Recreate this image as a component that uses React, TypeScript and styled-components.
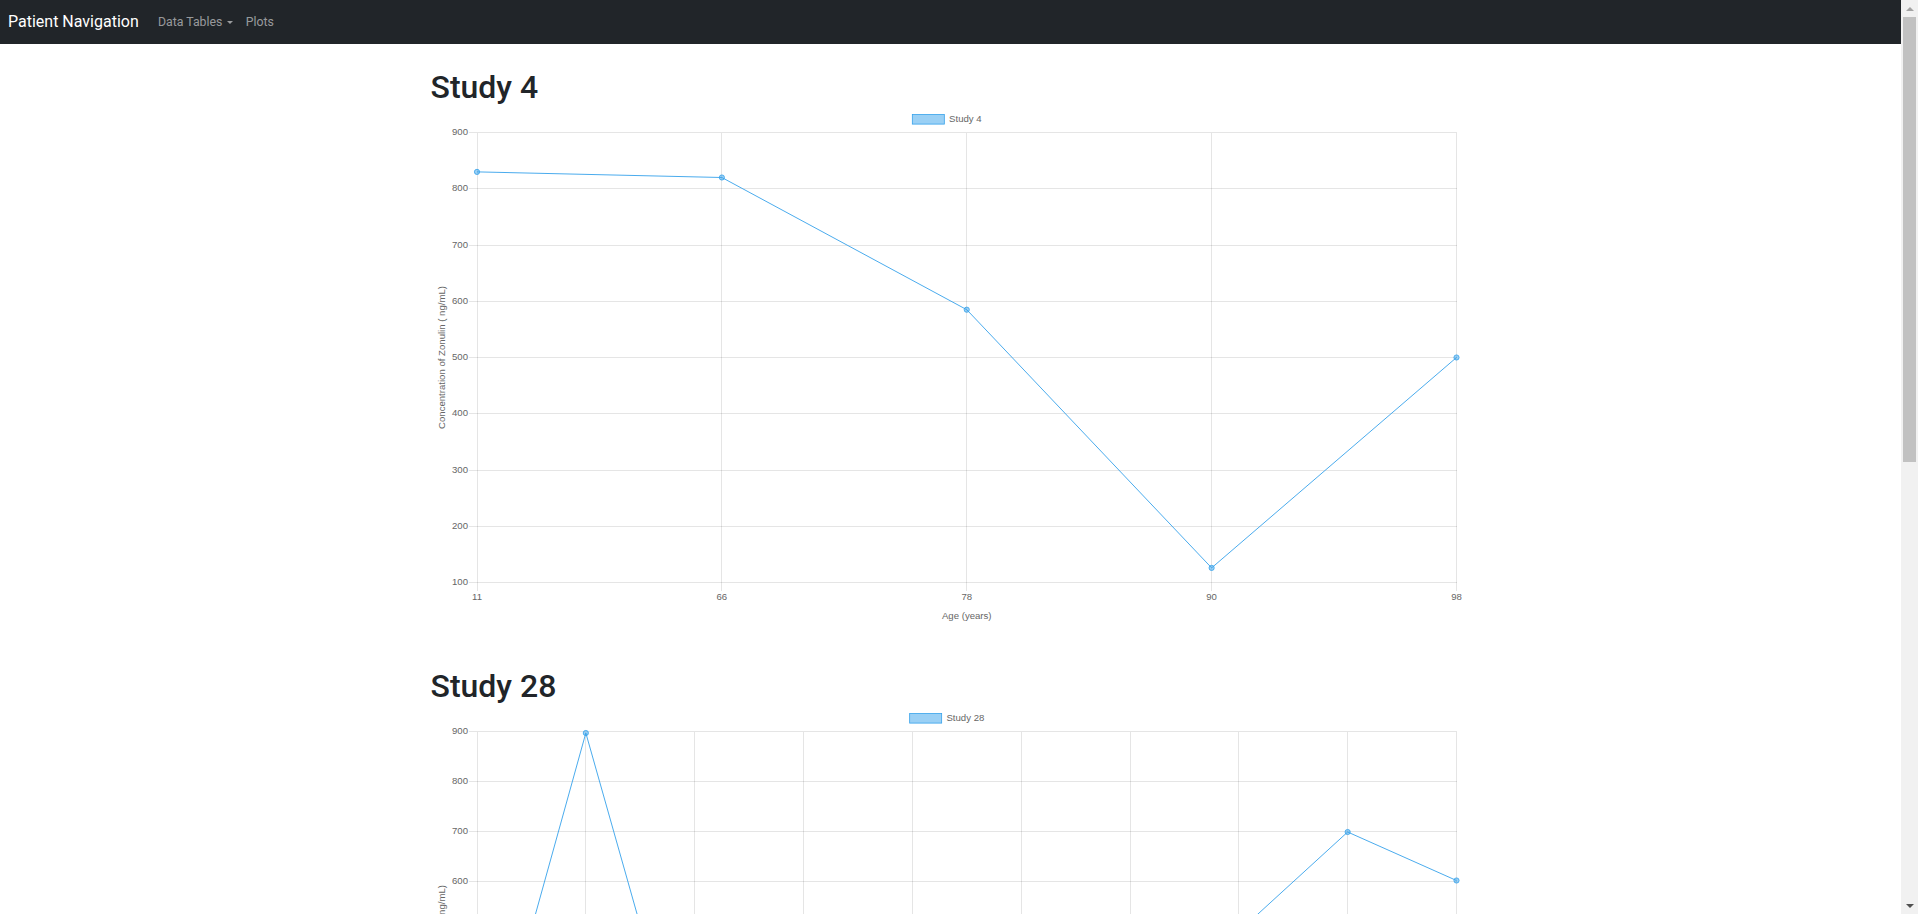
import React from 'react';
import styled, {createGlobalStyle} from 'styled-components';

const GlobalStyle = createGlobalStyle`
  html, body {
    margin: 0;
    padding: 0;
    background: #fff;
  }
  body {
    font-family: Roboto, "Liberation Sans", Arial, sans-serif;
    color: #212529;
  }
  #root {
    padding-right: 17px;
  }
`;

const Navbar = styled.nav`
  height: 44px;
  box-sizing: border-box;
  background: #212529;
  display: flex;
  align-items: center;
  padding: 0 8px;
`;
const Brand = styled.a`
  color: #fff;
  font-size: 16px;
  line-height: 24px;
  margin-right: 12.8px;
  text-decoration: none;
`;
const NavLink = styled.a`
  display: flex;
  align-items: center;
  color: rgba(255, 255, 255, 0.55);
  font-size: 12.3px;
  line-height: 20px;
  padding: 0 6.4px;
  text-decoration: none;
`;
const Caret = styled.span`
  display: inline-block;
  width: 0;
  height: 0;
  margin-left: 4.5px;
  margin-top: 1px;
  border-top: 3.8px solid currentColor;
  border-left: 3.6px solid transparent;
  border-right: 3.6px solid transparent;
`;

// window scrollbar, as in the screenshot
const ScrollTrack = styled.div`
  position: fixed;
  top: 0;
  right: 0;
  width: 17px;
  height: 100vh;
  background: #f1f1f1;
  display: flex;
  flex-direction: column;
`;
const ScrollArrow = styled.div<{ $down?: boolean; $dim?: boolean }>`
  height: 17px;
  display: flex;
  align-items: center;
  justify-content: center;
  margin-top: ${p => p.$down ? 'auto' : '0'};
  &::after {
    content: '';
    width: 0;
    height: 0;
    border-left: 4px solid transparent;
    border-right: 4px solid transparent;
    ${p => p.$down ? 'border-top' : 'border-bottom'}: 4px solid ${p => p.$dim ? '#a3a3a3' : '#505050'};
  }
`;
const ScrollThumb = styled.div`
  height: 445px;
  margin: 0 2px;
  background: #c1c1c1;
`;

const Main = styled.main`
  width: 1040px;
  margin: 0 auto;
  padding: 24px 0 0;
  display: flex;
  flex-direction: column;
  gap: 41px;
`;
const Section = styled.section`
  display: flex;
  flex-direction: column;
`;
const Title = styled.h2`
  margin: 0;
  font-size: 32px;
  font-weight: 500;
  line-height: 38px;
  color: #212529;
`;
const ChartSvg = styled.svg`
  display: block;
  font-family: "Liberation Sans", Arial, sans-serif;
  font-size: 9.6px;
  text {
    fill: #666;
  }
`;

// chart.js-like sizes (page zoomed to 80%)
const W = 1040;
const H = 520;
const PLOT_L = 46;
const PLOT_R = 1025.5;
const PLOT_T = 26.5;
const PLOT_B = 476.5;
const TICK = 8;
const GRID = 'rgba(0,0,0,0.1)';
const BLUE = '#36a2eb';
const BLUE_FILL = 'rgba(54,162,235,0.5)';

// arial widths, em
const charW: { [k: string]: number } = {S: 0.667, t: 0.278, u: 0.556, d: 0.556, y: 0.5, ' ': 0.278};
const textWidth = (s: string) =>
    s.split('').reduce((sum, c) => sum + (charW[c] ?? 0.556), 0) * 9.6;

type ChartProps = {
    name: string;
    labels: string[];
    values: number[];
    min: number;
    max: number;
};

function LineChart({name, labels, values, min, max}: ChartProps) {
    const steps = (max - min) / 100;
    const yOf = (v: number) => PLOT_B - (v - min) / (max - min) * (PLOT_B - PLOT_T);
    const step = (PLOT_R - PLOT_L) / (labels.length - 1);
    const xOf = (i: number) => PLOT_L + i * step;
    const ticks = Array.from({length: steps + 1}, (_, i) => max - i * 100);

    const legendW = 32 + 4.8 + textWidth(name) + 8;
    const legendX = W / 2 - legendW / 2;
    const points = values.map((v, i) => `${xOf(i)},${yOf(v)}`).join(' ');

    return (
        <ChartSvg width={W} height={H} viewBox={`0 0 ${W} ${H}`}>
            <rect x={legendX} y={8.5} width={32} height={9.6} fill={BLUE_FILL} stroke={BLUE} strokeWidth={0.8}/>
            <text x={legendX + 32 + 4.8} y={13.6} dominantBaseline="middle">{name}</text>

            <g shapeRendering="crispEdges" stroke={GRID} strokeWidth={1}>
                {ticks.map(t => (
                    <line key={t} x1={PLOT_L - TICK} x2={PLOT_R} y1={yOf(t)} y2={yOf(t)}/>
                ))}
                {labels.map((_, i) => (
                    <line key={i} x1={xOf(i)} x2={xOf(i)} y1={PLOT_T} y2={PLOT_B + TICK}/>
                ))}
            </g>

            {ticks.map(t => (
                <text key={t} x={PLOT_L - TICK - 1} y={yOf(t)} textAnchor="end" dominantBaseline="middle">{t}</text>
            ))}
            {labels.map((l, i) => (
                <text key={i} x={xOf(i)} y={494} textAnchor="middle">{l}</text>
            ))}
            <text x={(PLOT_L + PLOT_R) / 2} y={512.5} textAnchor="middle">Age (years)</text>
            <text x={11.2} y={(PLOT_T + PLOT_B) / 2} textAnchor="middle" dominantBaseline="middle"
                  transform={`rotate(-90 11.2 ${(PLOT_T + PLOT_B) / 2})`}>
                Concentration of Zonulin ( ng/mL)
            </text>

            <polyline points={points} fill="none" stroke={BLUE} strokeWidth={0.9}/>
            {values.map((v, i) => (
                <circle key={i} cx={xOf(i)} cy={yOf(v)} r={2.6} fill={BLUE_FILL} stroke={BLUE} strokeWidth={0.8}/>
            ))}
        </ChartSvg>
    );
}

const studies: ChartProps[] = [
    {name: 'Study 4', labels: ['11', '66', '78', '90', '98'], values: [830, 820, 585, 126, 500], min: 100, max: 900},
    {
        name: 'Study 28',
        labels: ['5', '14', '23', '31', '42', '55', '63', '71', '84', '95'],
        values: [114, 897, 128, 310, 220, 450, 180, 500, 699, 602],
        min: 0,
        max: 900
    },
    {name: 'Study 35', labels: ['19', '37', '52', '60', '74', '88'], values: [420, 610, 350, 770, 240, 530], min: 200, max: 800},
];

export default function App() {
    return (
        <>
            <GlobalStyle/>
            <Navbar>
                <Brand href="#">Patient Navigation</Brand>
                <NavLink href="#">Data Tables<Caret/></NavLink>
                <NavLink href="#">Plots</NavLink>
            </Navbar>
            <Main>
                {studies.map(s => (
                    <Section key={s.name}>
                        <Title>{s.name}</Title>
                        <LineChart {...s}/>
                    </Section>
                ))}
            </Main>
            <ScrollTrack>
                <ScrollArrow $dim/>
                <ScrollThumb/>
                <ScrollArrow $down/>
            </ScrollTrack>
        </>
    );
}
